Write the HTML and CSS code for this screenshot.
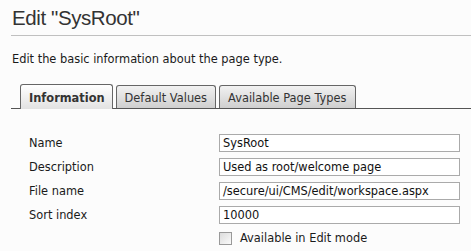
FILE: index.html
```html
<!DOCTYPE html>
<html>
<head>
<meta charset="utf-8">
<link rel="stylesheet" href="styles.css">
</head>
<body>
<div class="page">
  <h1 class="title">Edit "SysRoot"</h1>
  <p class="intro">Edit the basic information about the page type.</p>
  <div class="tabs">
    <div class="tab active">Information</div>
    <div class="tab">Default Values</div>
    <div class="tab">Available Page Types</div>
  </div>
  <div class="form">
    <label class="lbl">Name</label>
    <div class="field">SysRoot</div>
    <label class="lbl">Description</label>
    <div class="field">Used as root/welcome page</div>
    <label class="lbl">File name</label>
    <div class="field">/secure/ui/CMS/edit/workspace.aspx</div>
    <label class="lbl">Sort index</label>
    <div class="field">10000</div>
    <span></span>
    <div class="check"><span class="box"></span><span>Available in Edit mode</span></div>
  </div>
</div>
</body>
</html>
```
FILE: styles.css
```css
html, body {
  margin: 0;
  padding: 0;
  background: #fcfcfc;
}
.page {
  padding: 0 0 0 11px;
  font-family: "DejaVu Sans", Verdana, sans-serif;
  font-size: 11.4px;
  color: #1a1a1a;
}
.title {
  margin: 0;
  padding: 6px 0 5px 1px;
  font-family: "Liberation Sans", Arial, sans-serif;
  font-weight: normal;
  font-size: 20.5px;
  letter-spacing: -0.4px;
  line-height: 24px;
  color: #333;
  border-bottom: 1px solid #c0c0c0;
}
.intro {
  margin: 16px 0 0 1px;
  line-height: 14px;
}
.tabs {
  display: flex;
  gap: 3px;
  margin-top: 18px;
  padding-left: 9px;
  border-bottom: 1px solid #555;
  height: 24px;
}
.tab {
  height: 23px;
  box-sizing: border-box;
  border: 1px solid #666;
  border-bottom: none;
  border-radius: 3px 3px 0 0;
  padding: 5px 8px 0 8px;
  background: linear-gradient(#f2f2f2, #cfcfcf);
  color: #333;
  line-height: 14px;
  margin-top: 1px;
}
.tab.active {
  height: 25px;
  margin-top: 0;
  padding: 6px 7px 0 8px;
  font-weight: bold;
  background: linear-gradient(#ffffff, #e2e2e2);
  margin-bottom: -1px;
}
.form {
  display: grid;
  grid-template-columns: 190px 241px;
  row-gap: 6px;
  margin-top: 25px;
  padding-left: 18px;
}
.lbl {
  line-height: 18px;
  color: #1a1a1a;
}
.field {
  height: 18px;
  box-sizing: border-box;
  border: 1px solid #aaa;
  background: #fff;
  padding: 1px 3px;
  line-height: 14px;
  color: #111;
}
.check {
  display: flex;
  align-items: center;
  gap: 8px;
  height: 14px;
  margin-top: 1px;
}
.box {
  width: 11px;
  height: 11px;
  border: 1px solid #999;
  background: linear-gradient(135deg, #dcdcdc, #fafafa);
}
```
